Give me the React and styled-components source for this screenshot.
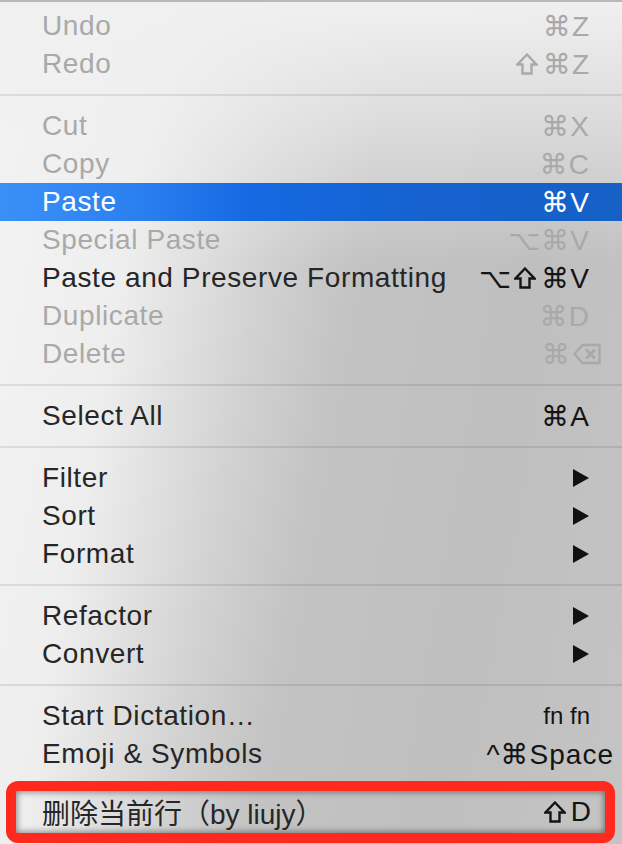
import styled, { createGlobalStyle } from "styled-components";

const GlobalStyle = createGlobalStyle`
    html, body {
        margin: 0;
        padding: 0;
        background: #ffffff;
    }
    body {
        font-family: "Liberation Sans", "DejaVu Sans", "Noto Sans CJK SC", sans-serif;
    }
`

const Menu = styled.div`
    width: 622px;
    height: 844px;
    box-sizing: border-box;
    overflow: hidden;
    border-top: 2px solid #b9b9b9;
    padding-top: 5px;
    background:
        linear-gradient(to bottom, rgba(240, 240, 240, 1) 0px, rgba(240, 240, 240, 0.6) 110px, rgba(240, 240, 240, 0) 260px),
        linear-gradient(100deg, #f4f4f4 0%, #eeeeee 22%, #d2d2d2 40%, #c3c3c3 52%, #bfbfbf 75%, #c4c4c4 100%);
`

const Row = styled.div`
    height: 38px;
    display: flex;
    align-items: center;
    justify-content: space-between;
    padding: 0 32px 0 42px;
    font-size: 28px;
    letter-spacing: 0.6px;
    color: ${p => p.$active ? "#ffffff" : p.$disabled ? "#a9a9a9" : "#262626"};
    background: ${p => p.$active
        ? "linear-gradient(to right, #3b90f7 0%, #2b80f0 22%, #1669e2 40%, #1562cf 70%, #1660c6 100%)"
        : "transparent"};
`

const Label = styled.span`
    white-space: nowrap;
`

const Keys = styled.span`
    display: flex;
    align-items: center;
    gap: 2px;
    white-space: nowrap;
    font-family: "Liberation Sans", "DejaVu Sans", sans-serif;
    font-size: ${p => p.$small ? 24 : 28}px;
    letter-spacing: ${p => p.$small ? 0 : 1}px;
    margin-right: ${p => p.$shift || 0}px;
    color: ${p => p.$active ? "#ffffff" : p.$disabled ? "#a9a9a9" : "#141414"};
`

const Glyph = styled.svg`
    width: ${p => p.$w}px;
    height: 22px;
    margin-right: 3px;
    fill: none;
    stroke: currentColor;
    stroke-width: 2.4;
    stroke-linejoin: miter;
`

const Separator = styled.div`
    height: 24px;
    display: flex;
    align-items: center;

    &::after {
        content: '';
        flex: 1;
        height: 2px;
        background: rgba(0, 0, 0, 0.09);
    }
`

const Arrow = styled.svg`
    width: 18px;
    height: 18px;
    fill: #111111;
`

const Highlight = styled.div`
    margin: 8px 7px 0 6px;
    border: 10px solid #fe2a1d;
    border-radius: 12px;
    box-shadow: inset 0 0 6px 1px rgba(0, 0, 0, 0.45);
`

const NoteRow = styled(Row)`
    height: 42px;
    padding: 0 13px 0 26px;
    font-family: "Liberation Sans", "Noto Sans CJK SC", sans-serif;
    letter-spacing: 0;
`

const groups = [
    [
        { label: "Undo", keys: "⌘Z", disabled: true },
        { label: "Redo", keys: "⇧⌘Z", disabled: true },
    ],
    [
        { label: "Cut", keys: "⌘X", disabled: true },
        { label: "Copy", keys: "⌘C", disabled: true },
        { label: "Paste", keys: "⌘V", active: true },
        { label: "Special Paste", keys: "⌥⌘V", disabled: true },
        { label: "Paste and Preserve Formatting", keys: "⌥⇧⌘V" },
        { label: "Duplicate", keys: "⌘D", disabled: true },
        { label: "Delete", keys: "⌘⌫", disabled: true, shift: -14 },
    ],
    [
        { label: "Select All", keys: "⌘A" },
    ],
    [
        { label: "Filter", sub: true },
        { label: "Sort", sub: true },
        { label: "Format", sub: true },
    ],
    [
        { label: "Refactor", sub: true },
        { label: "Convert", sub: true },
    ],
    [
        { label: "Start Dictation…", keys: "fn fn", small: true },
        { label: "Emoji & Symbols", keys: "^⌘Space", shift: -24 },
    ],
]

function ShiftGlyph() {
    return (
        <Glyph $w={22} viewBox="0 0 22 22">
            <polygon points="11,1.5 20.5,11.5 15.5,11.5 15.5,20.5 6.5,20.5 6.5,11.5 1.5,11.5" />
        </Glyph>
    )
}

function DeleteGlyph() {
    return (
        <Glyph $w={28} viewBox="0 0 28 22">
            <polygon points="1.5,11 9.5,2 26.5,2 26.5,20 9.5,20" />
            <path d="M13 6.5 L22 15.5 M22 6.5 L13 15.5" strokeWidth="3" />
        </Glyph>
    )
}

// split a shortcut into text runs and drawn glyphs (⇧ and ⌫)
function renderKeys(keys) {
    const out = []
    let text = ""
    Array.from(keys).forEach((ch, i) => {
        if (ch === "⇧" || ch === "⌫") {
            if (text) out.push(<span key={"t" + i}>{text}</span>)
            text = ""
            out.push(ch === "⇧" ? <ShiftGlyph key={i} /> : <DeleteGlyph key={i} />)
        } else {
            text += ch
        }
    })
    if (text) out.push(<span key="end">{text}</span>)
    return out
}

function SubArrow() {
    return (
        <Arrow viewBox="0 0 18 18">
            <polygon points="1,0 17,9 1,18" />
        </Arrow>
    )
}

function Item({ item }) {
    return (
        <Row $disabled={item.disabled} $active={item.active}>
            <Label>{item.label}</Label>
            {item.sub ? <SubArrow /> : (
                <Keys
                    $disabled={item.disabled}
                    $active={item.active}
                    $shift={item.shift}
                    $small={item.small}
                >
                    {renderKeys(item.keys)}
                </Keys>
            )}
        </Row>
    )
}

export default function App() {
    return (
        <>
            <GlobalStyle />
            <Menu>
                {groups.map((group, i) => (
                    <div key={i}>
                        {i > 0 && <Separator />}
                        {group.map(item => <Item key={item.label} item={item} />)}
                    </div>
                ))}
                <Highlight>
                    <NoteRow>
                        <Label>删除当前行（by liujy）</Label>
                        <Keys>{renderKeys("⇧D")}</Keys>
                    </NoteRow>
                </Highlight>
            </Menu>
        </>
    )
}
